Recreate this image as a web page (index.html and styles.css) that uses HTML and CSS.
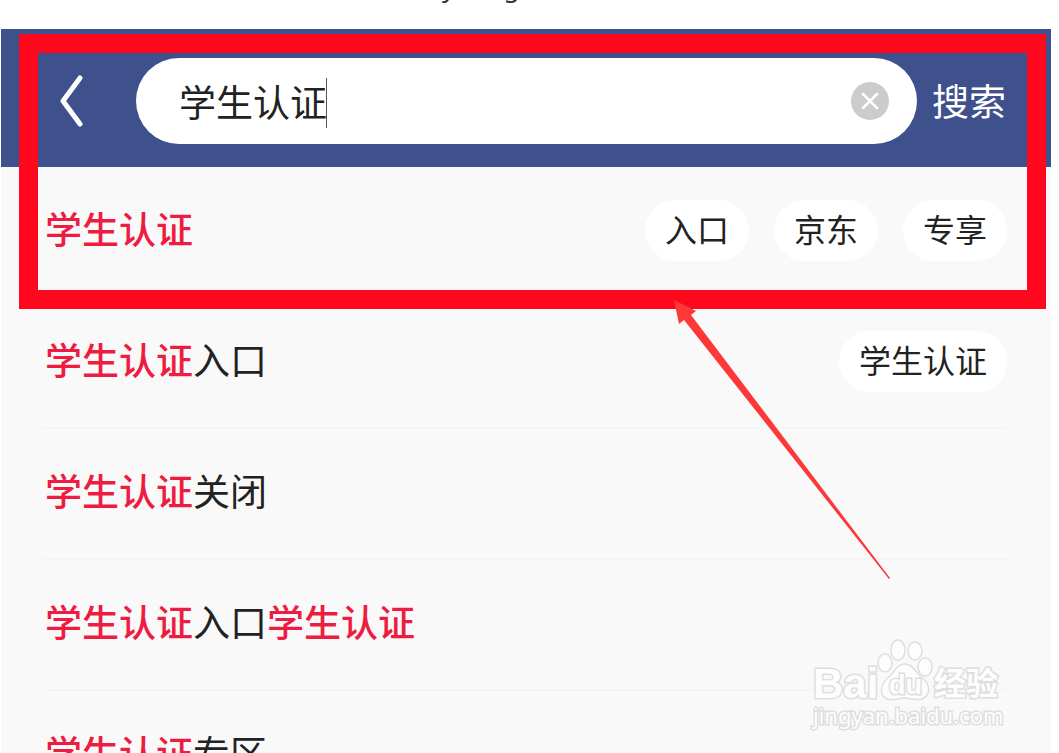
FILE: index.html
```
<!DOCTYPE html>
<html lang="zh-CN">
<head>
<meta charset="UTF-8">
<title>学生认证</title>

<link rel="stylesheet" href="styles.css">
</head>

<body>

<p class="caption">Everything</p>

<main class="screen">

<!-- Search bar -->
<form class="search-bar" onsubmit="return false">
    <button class="back" type="button" aria-label="返回">
        <svg width="24" height="54" viewBox="0 0 24 54"><path d="M21 4 L4 27 L21 50" fill="none" stroke="#fff" stroke-width="5" stroke-linecap="round" stroke-linejoin="round"/></svg>
    </button>
    <div class="search-box">
        <input type="text" aria-label="搜索" value="学生认证">
        <span class="caret"></span>
        <button class="clear" type="reset" aria-label="清除">
            <svg width="38" height="38" viewBox="0 0 38 38"><circle cx="19" cy="19" r="19" fill="#ccc"/><path d="M12 12 L26 26 M26 12 L12 26" stroke="#fff" stroke-width="2.5" stroke-linecap="round"/></svg>
        </button>
    </div>
    <button class="submit" type="submit">搜索</button>
</form>

<!-- Suggestions -->
<ul class="suggestions">
    <li>
        <a href="#"><b>学生认证</b></a>
        <div class="tags">
            <button>入口</button>
            <button>京东</button>
            <button>专享</button>
        </div>
    </li>
    <li>
        <a href="#"><b>学生认证</b>入口</a>
        <div class="tags">
            <button>学生认证</button>
        </div>
    </li>
    <li><a href="#"><b>学生认证</b>关闭</a></li>
    <li><a href="#"><b>学生认证</b>入口<b>学生认证</b></a></li>
    <li><a href="#"><b>学生认证</b>专区</a></li>
</ul>

<!-- Red marks -->
<div class="frame"></div>
<svg class="arrow" width="218" height="282" viewBox="0 0 218 282">
    <path d="M1 1 L23 12 L18 16 L217 279 L216 280 L11 21 L6 25 Z" fill="#fd3838"/>
</svg>

<!-- Watermark -->
<svg class="watermark" width="200" height="96" viewBox="0 0 200 96">
    <g fill="#fdfdfd" stroke="#dedede" stroke-width="1.5">
        <text class="wm-bai" x="3" y="61">Bai</text>
        <ellipse cx="75" cy="26" rx="7" ry="9"/>
        <ellipse cx="88" cy="13" rx="7" ry="10"/>
        <ellipse cx="105" cy="14" rx="7" ry="9"/>
        <ellipse cx="115" cy="30" rx="7" ry="9"/>
        <path d="M95 27 C102 27 105 34 110 39 C118 45 121 51 117 58 C112 66 101 61 95 61 C88 61 79 66 73 59 C69 51 73 45 80 39 C85 34 87 27 95 27 Z"/>
        <text class="wm-du" x="79" y="57">du</text>
        <text class="wm-jingyan" x="124" y="58">经验</text>
        <text class="wm-url" x="3" y="87">jingyan.baidu.com</text>
    </g>
</svg>

</main>

</body>
</html>
```
FILE: styles.css
```
body {
    margin: 0;
    height: 100vh;
    overflow: hidden;
    background: #fff;
    font-family: "Noto Sans", "Noto Sans CJK SC", sans-serif;
}

button, input {
    font-family: inherit;
    border: none;
    padding: 0;
    background: none;
}

button { cursor: pointer; }
svg { display: block; }

/* Last line of the paragraph above the picture */
.caption {
    margin: -31px 0 0;
    height: 60px;
    padding-left: 389px;
    font-size: 26px;
    line-height: 36px;
    color: #333;
}

.screen {
    position: relative;
    margin: 0 8px 0 1px;
    background: #f9f9f9;
}

/* Search bar */
.search-bar {
    display: flex;
    align-items: center;
    height: 138px;
    padding: 0 45px 0 58px;
    box-sizing: border-box;
    background: #3f518c;
}

.back { margin: 6px 53px 0 0; }

.search-box {
    position: relative;
    flex: 1;
    display: flex;
    align-items: center;
    height: 86px;
    margin-top: 6px;
    padding: 0 28px 0 43px;
    box-sizing: border-box;
    border-radius: 43px;
    background: #fff;
}

.search-box input {
    flex: 1;
    min-width: 0;
    height: 54px;
    font-size: 37px;
    color: #222;
    outline: none;
}

.caret {
    position: absolute;
    left: 190px;
    top: 20px;
    width: 1px;
    height: 50px;
    background: #555;
}

.submit {
    margin: 8px 0 0 15px;
    font-size: 37px;
    line-height: 54px;
    color: #fff;
}

/* Suggestions */
.suggestions {
    list-style: none;
    margin: 0;
    padding: 0 44px 0 42px;
}

.suggestions li {
    display: flex;
    align-items: center;
    justify-content: space-between;
    height: 131px;
    box-sizing: border-box;
    padding: 0 0 2px 2px;
    border-bottom: 2px solid #f5f5f5;
}

.suggestions a {
    padding-bottom: 2px;
    font-size: 37px;
    line-height: 54px;
    color: #222;
    text-decoration: none;
}

.suggestions b {
    font-weight: 500;
    color: #ee1c40;
}

.tags {
    display: flex;
    gap: 25px;
}

.tags button {
    padding: 0 20px 2px;
    border-radius: 31px;
    background: #fff;
    font-size: 32px;
    line-height: 59px;
    color: #222;
}

/* Red marks */
.frame {
    position: absolute;
    left: 18px;
    right: 5px;
    top: 5px;
    height: 275px;
    box-sizing: border-box;
    border: 19px solid #ff081d;
    pointer-events: none;
}

.arrow {
    position: absolute;
    left: 672px;
    top: 270px;
    pointer-events: none;
}

/* Watermark */
.watermark {
    position: absolute;
    right: 41px;
    top: 608px;
    pointer-events: none;
}

.watermark text {
    paint-order: stroke;
    stroke-width: 3px;
}

.wm-bai {
    font: bold 42px "Liberation Sans", sans-serif;
}

.wm-du {
    font: bold 27px "Liberation Sans", sans-serif;
}

.wm-jingyan {
    font: bold 32px "Noto Sans CJK SC", sans-serif;
}

.wm-url {
    font: 22px "Noto Sans", sans-serif;
}
```
